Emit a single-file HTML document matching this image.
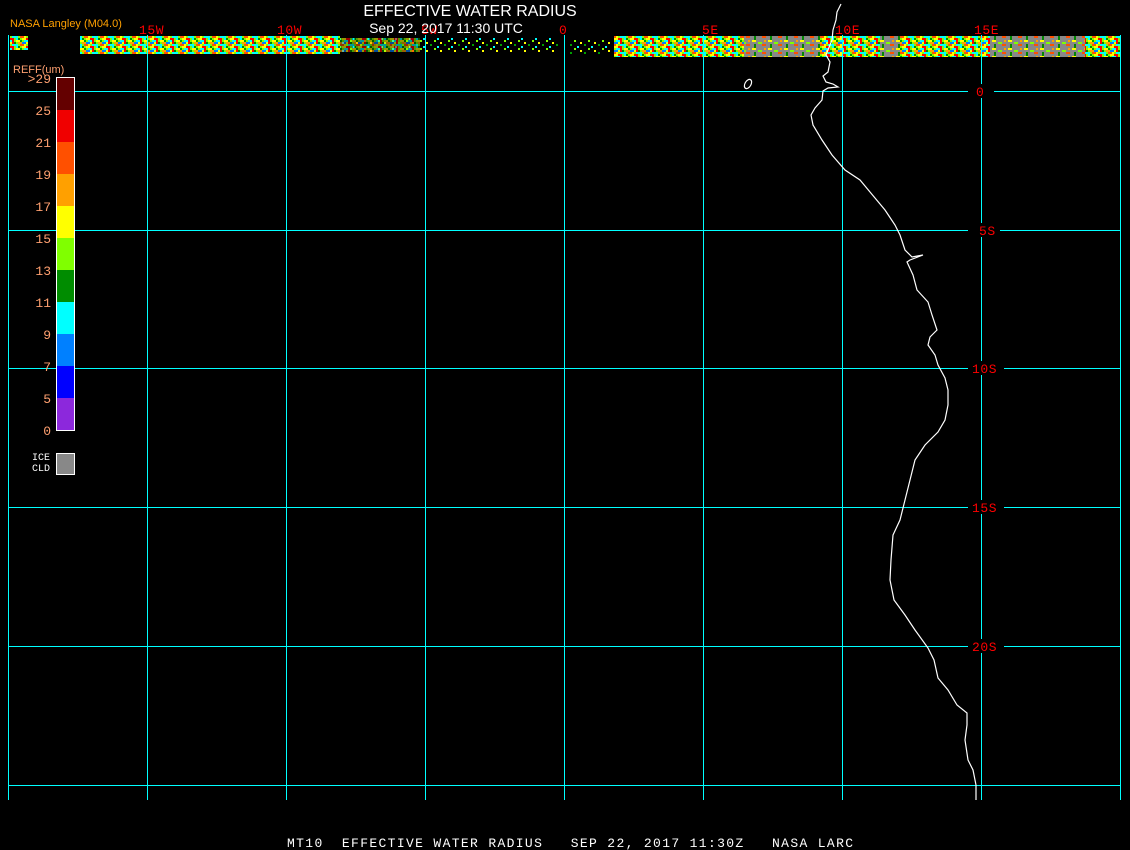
<!DOCTYPE html>
<html><head><meta charset="utf-8"><style>
html,body{margin:0;padding:0;background:#000;width:1130px;height:850px;overflow:hidden}
svg{display:block}
text{font-family:"Liberation Mono","DejaVu Sans Mono",monospace}
</style></head><body>
<svg width="1130" height="850" xmlns="http://www.w3.org/2000/svg" shape-rendering="crispEdges">
<defs>
<pattern id="n1" width="16" height="8" patternUnits="userSpaceOnUse">
<rect width="16" height="8" fill="#80ff00"/>
<rect x="0" y="0" width="4" height="2" fill="#ffff00"/><rect x="4" y="0" width="2" height="2" fill="#00a000"/>
<rect x="8" y="0" width="4" height="2" fill="#00ffff"/><rect x="12" y="0" width="2" height="4" fill="#ff0000"/>
<rect x="2" y="2" width="4" height="2" fill="#ffa000"/><rect x="6" y="2" width="4" height="2" fill="#0080ff"/>
<rect x="10" y="2" width="2" height="2" fill="#ffff00"/><rect x="14" y="2" width="2" height="2" fill="#008800"/>
<rect x="0" y="4" width="2" height="4" fill="#00ffff"/><rect x="4" y="4" width="4" height="2" fill="#ff5000"/>
<rect x="8" y="4" width="2" height="2" fill="#ffff00"/><rect x="12" y="4" width="4" height="2" fill="#00ffff"/>
<rect x="2" y="6" width="2" height="2" fill="#008800"/><rect x="6" y="6" width="4" height="2" fill="#ffff00"/>
<rect x="10" y="6" width="4" height="2" fill="#ff0000"/>
</pattern>
<pattern id="n2" width="14" height="8" patternUnits="userSpaceOnUse">
<rect x="0" y="0" width="2" height="2" fill="#80ff00"/><rect x="6" y="2" width="2" height="2" fill="#ffff00"/>
<rect x="10" y="4" width="2" height="2" fill="#00a000"/><rect x="3" y="6" width="2" height="2" fill="#00ffff"/>
</pattern>
<pattern id="n3" width="16" height="8" patternUnits="userSpaceOnUse">
<rect width="16" height="8" fill="#888"/>
<rect x="0" y="0" width="4" height="2" fill="#ffff00"/><rect x="6" y="2" width="4" height="2" fill="#80ff00"/>
<rect x="10" y="4" width="4" height="2" fill="#ff5000"/><rect x="2" y="4" width="2" height="4" fill="#008800"/>
<rect x="12" y="0" width="2" height="2" fill="#ffa000"/>
</pattern>
</defs>
<rect width="1130" height="850" fill="#000"/>
<rect x="80" y="36" width="260" height="18" fill="url(#n1)"/>
<rect x="10" y="36" width="18" height="14" fill="url(#n1)"/>
<rect x="340" y="38" width="220" height="14" fill="url(#n2)"/>
<rect x="340" y="38" width="80" height="14" fill="url(#n1)" opacity="0.6"/>
<rect x="570" y="40" width="40" height="14" fill="url(#n2)"/>
<rect x="614" y="36" width="506" height="21" fill="#888"/>
<rect x="614" y="36" width="130" height="21" fill="url(#n1)"/>
<rect x="744" y="36" width="376" height="21" fill="url(#n3)"/>
<rect x="820" y="36" width="60" height="21" fill="url(#n1)"/>
<rect x="900" y="36" width="90" height="21" fill="url(#n1)"/>
<rect x="1085" y="36" width="35" height="21" fill="url(#n1)"/>
<g stroke="#00ffff" stroke-width="1">
<line x1="8.5" y1="35" x2="8.5" y2="800"/><line x1="147.5" y1="35" x2="147.5" y2="800"/>
<line x1="286.5" y1="35" x2="286.5" y2="800"/><line x1="425.5" y1="35" x2="425.5" y2="800"/>
<line x1="564.5" y1="35" x2="564.5" y2="800"/><line x1="703.5" y1="35" x2="703.5" y2="800"/>
<line x1="842.5" y1="35" x2="842.5" y2="800"/><line x1="981.5" y1="35" x2="981.5" y2="800"/>
<line x1="1120.5" y1="35" x2="1120.5" y2="800"/>
<line x1="8" y1="91.5" x2="1120" y2="91.5"/><line x1="8" y1="230.5" x2="1120" y2="230.5"/>
<line x1="8" y1="368.5" x2="1120" y2="368.5"/><line x1="8" y1="507.5" x2="1120" y2="507.5"/>
<line x1="8" y1="646.5" x2="1120" y2="646.5"/><line x1="8" y1="785.5" x2="1120" y2="785.5"/>
</g>
<g fill="#000"><rect x="968" y="84" width="26" height="14"/><rect x="968" y="223" width="32" height="14"/><rect x="968" y="361" width="36" height="14"/><rect x="968" y="500" width="36" height="14"/><rect x="968" y="639" width="36" height="14"/></g>
<g fill="#ff0000" font-size="13" letter-spacing="0.6">
<text x="976" y="96">0</text><text x="979" y="235">5S</text><text x="972" y="373">10S</text><text x="972" y="512">15S</text><text x="972" y="651">20S</text>
<text x="139" y="34">15W</text><text x="277" y="34">10W</text><text x="421" y="34">5W</text><text x="559" y="34">0</text>
<text x="702" y="34">5E</text><text x="835" y="34">10E</text><text x="974" y="34">15E</text>
</g>
<g fill="none" stroke="#fff" stroke-width="1.2" shape-rendering="auto">
<polyline points="841,4 837,12 836,20 833,30 832,40 826,55 830,62 828,72 823,76 826,82 833,84 838,87 828,88 823,91 822,100 815,108 811,115 813,125 822,140 832,155 845,170 860,180 870,192 885,210 895,225 900,235 905,250 912,257 923,255 910,260 907,262 913,275 917,290 928,302 932,315 937,330 930,337 928,345 935,355 938,365 945,378 948,390 948,405 945,420 938,432 925,445 915,460 910,480 905,500 900,520 893,535 891,560 890,580 894,600 905,615 915,630 928,648 934,660 938,678 948,690 957,705 967,713 967,725 965,740 968,760 973,770 976,785 976,800"/>
<ellipse cx="748" cy="84" rx="3" ry="5" transform="rotate(30 748 84)"/>
</g>
<g>
<rect x="56" y="77" width="18" height="33" fill="#640000"/>
<rect x="56" y="110" width="18" height="32" fill="#f00000"/>
<rect x="56" y="142" width="18" height="32" fill="#ff5000"/>
<rect x="56" y="174" width="18" height="32" fill="#ffa000"/>
<rect x="56" y="206" width="18" height="32" fill="#ffff00"/>
<rect x="56" y="238" width="18" height="32" fill="#80ff00"/>
<rect x="56" y="270" width="18" height="32" fill="#008c00"/>
<rect x="56" y="302" width="18" height="32" fill="#00ffff"/>
<rect x="56" y="334" width="18" height="32" fill="#0080ff"/>
<rect x="56" y="366" width="18" height="32" fill="#0000ff"/>
<rect x="56" y="398" width="18" height="32" fill="#8c28dc"/>
<rect x="56.5" y="77.5" width="18" height="353" fill="none" stroke="#fff"/>
<rect x="56.5" y="453.5" width="18" height="21" fill="#888" stroke="#fff"/>
</g>
<text x="13" y="73" fill="#ffa070" font-size="11" style="font-family:'Liberation Sans',sans-serif">REFF(um)</text>
<g fill="#ffa070" font-size="13" text-anchor="end">
<text x="51" y="83">&gt;29</text><text x="51" y="115">25</text><text x="51" y="147">21</text><text x="51" y="179">19</text>
<text x="51" y="211">17</text><text x="51" y="243">15</text><text x="51" y="275">13</text><text x="51" y="307">11</text>
<text x="51" y="339">9</text><text x="51" y="371">7</text><text x="51" y="403">5</text><text x="51" y="435">0</text>
</g>
<g fill="#fff" font-size="10" text-anchor="end"><text x="50" y="460">ICE</text><text x="50" y="471">CLD</text></g>
<text x="10" y="27" fill="#ffa000" font-size="11" style="font-family:'Liberation Sans',sans-serif">NASA Langley (M04.0)</text>
<text x="470" y="16" fill="#fff" font-size="16" text-anchor="middle" style="font-family:'Liberation Sans',sans-serif">EFFECTIVE WATER RADIUS</text>
<text x="446" y="33" fill="#fff" font-size="14" text-anchor="middle" style="font-family:'Liberation Sans',sans-serif">Sep 22, 2017 11:30 UTC</text>
<text x="287" y="847" fill="#fff" font-size="13" letter-spacing="1.35" xml:space="preserve">MT10  EFFECTIVE WATER RADIUS   SEP 22, 2017 11:30Z   NASA LARC</text>
</svg>
</body></html>
